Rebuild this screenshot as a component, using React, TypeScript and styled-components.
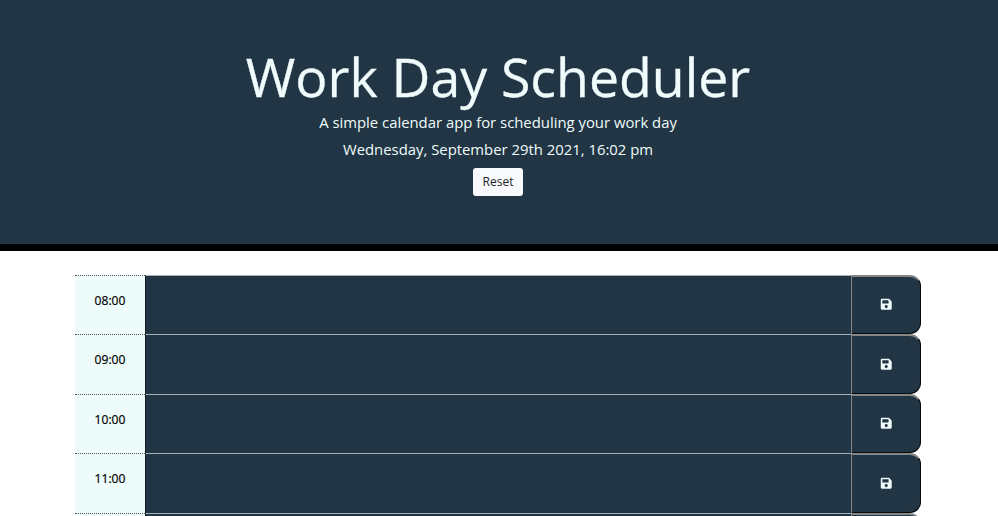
import React from "react";
import styled, { createGlobalStyle } from "styled-components";
import { FaSave } from "react-icons/fa";

const GlobalStyle = createGlobalStyle`
  *, *::before, *::after { box-sizing: border-box; }
  html, body { margin: 0; height: 516px; overflow: hidden; background: #fff; }
  body { font-family: "Open Sans", "Noto Sans", sans-serif; font-size: 16px; color: #000; }
`;

const Page = styled.div`
  display: flex;
  flex-direction: column;
  height: 516px;
  overflow: hidden;
`;

const Header = styled.header`
  flex: none;
  height: 251px;
  padding: 43px 2px 0 0;
  display: flex;
  flex-direction: column;
  align-items: center;
  background: #213545;
  color: #f0fcfb;
  border-bottom: 7px solid #000;
`;

const Title = styled.h1`
  margin: 0;
  font-size: 53.6px;
  font-weight: 400;
  line-height: 67px;
  white-space: nowrap;
  -webkit-text-stroke: 0.3px #f0fcfb;
`;

const Lead = styled.p`
  margin: 0;
  font-size: 14.87px;
  line-height: 27px;
  white-space: nowrap;

  &:first-of-type { margin-top: -1px; }
`;

const ResetButton = styled.button`
  width: 50px;
  height: 28px;
  margin-top: 5px;
  padding: 0;
  border: 0;
  border-radius: 3px;
  background: #f8f9fc;
  color: #212529;
  font: 400 12px/28px "Open Sans", sans-serif;
`;

const Schedule = styled.main`
  flex: none;
  width: 846px;
  margin: 24px 0 0 75px;
`;

const TimeBlock = styled.div`
  display: grid;
  grid-template-columns: 70px 706px 70px;
  height: 59.4px;
`;

const Hour = styled.div`
  padding-top: 15px;
  border-top: 1px dotted #4c585d;
  background: #edfcfb;
  text-align: center;
  font-size: 12.1px;
  font-weight: 500;
  line-height: 20px;
  -webkit-text-stroke: 0.2px #000;
`;

const Task = styled.textarea`
  display: block;
  width: 100%;
  height: 100%;
  border: 0;
  border-top: 1px solid #a3b3b9;
  border-left: 1px solid #101a24;
  border-radius: 0;
  resize: none;
  outline: 0;
  background: #213545;
  color: #fff;
`;

const SaveButton = styled.button`
  display: flex;
  align-items: center;
  justify-content: center;
  height: 59.4px;
  padding: 0 0 1px;
  border: solid;
  border-width: 2px 1px 1px 1px;
  border-color: #858786 #07090b #07090b #858786;
  border-radius: 0 11px 11px 0;
  background: #213545;
  color: #f0fcfb;
  font-size: 12.5px;
`;

const hours = ["08:00", "09:00", "10:00", "11:00", ""];

export default function App() {
  return (
    <Page>
      <GlobalStyle />
      <Header>
        <Title>Work Day Scheduler</Title>
        <Lead>A simple calendar app for scheduling your work day</Lead>
        <Lead>Wednesday, September 29th 2021, 16:02 pm</Lead>
        <ResetButton>Reset</ResetButton>
      </Header>
      <Schedule>
        {hours.map((hour, index) => (
          <TimeBlock key={index}>
            <Hour>{hour}</Hour>
            <Task aria-label="Task" />
            <SaveButton aria-label="Save"><FaSave /></SaveButton>
          </TimeBlock>
        ))}
      </Schedule>
    </Page>
  );
}
